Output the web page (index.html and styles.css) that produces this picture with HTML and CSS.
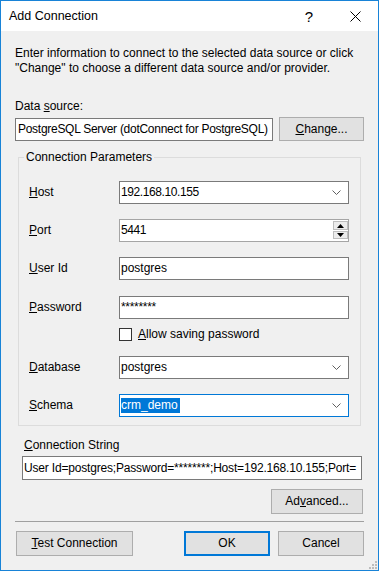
FILE: index.html
```html
<!DOCTYPE html>
<html lang="en">
<head>
<meta charset="utf-8">
<title>Add Connection</title>
<link rel="stylesheet" href="styles.css">
</head>
<body>
<div class="window">
  <div class="titlebar">
    <span class="title">Add Connection</span>
    <span class="cap-btn help">?</span>
    <span class="cap-btn close">
      <svg width="11" height="11" viewBox="0 0 11 11"><path d="M0.5 0.5 L10.5 10.5 M10.5 0.5 L0.5 10.5" stroke="#000" stroke-width="1" fill="none"/></svg>
    </span>
  </div>
  <div class="content">
    <p class="intro">Enter information to connect to the selected data source or click<br>"Change" to choose a different data source and/or provider.</p>
    <div class="ds-label">Data <u>s</u>ource:</div>
    <div class="ds-row">
      <div class="textbox ds-box">PostgreSQL Server (dotConnect for PostgreSQL)</div>
      <div class="btn btn-change"><span><u>C</u>hange...</span></div>
    </div>
    <fieldset class="group">
      <legend>Connection Parameters</legend>
      <div class="params">
        <div class="row">
          <span class="lbl"><u>H</u>ost</span>
          <div class="field combo"><span class="val num">192.168.10.155</span><svg class="chev" width="9" height="5" viewBox="0 0 9 5"><polyline points="0.5,0.5 4.5,4.5 8.5,0.5" fill="none" stroke="#606060" stroke-width="1"/></svg></div>
        </div>
        <div class="row">
          <span class="lbl"><u>P</u>ort</span>
          <div class="field spin"><span class="val num">5441</span>
            <div class="spin-btns">
              <div class="spin-btn"><svg width="7" height="4" viewBox="0 0 7 4"><polygon points="3.5,0 7,4 0,4" fill="#000"/></svg></div>
              <div class="spin-btn"><svg width="7" height="4" viewBox="0 0 7 4"><polygon points="0,0 7,0 3.5,4" fill="#000"/></svg></div>
            </div>
          </div>
        </div>
        <div class="row">
          <span class="lbl"><u>U</u>ser Id</span>
          <div class="field text"><span class="val">postgres</span></div>
        </div>
        <div class="row gap16">
          <span class="lbl"><u>P</u>assword</span>
          <div class="field text"><span class="val pw">********</span></div>
        </div>
        <div class="row cb-row">
          <span class="lbl"></span>
          <span class="checkbox"></span>
          <span class="cb-label"><u>A</u>llow saving password</span>
        </div>
        <div class="row">
          <span class="lbl"><u>D</u>atabase</span>
          <div class="field combo"><span class="val">postgres</span><svg class="chev" width="9" height="5" viewBox="0 0 9 5"><polyline points="0.5,0.5 4.5,4.5 8.5,0.5" fill="none" stroke="#606060" stroke-width="1"/></svg></div>
        </div>
        <div class="row">
          <span class="lbl"><u>S</u>chema</span>
          <div class="field combo focused"><span class="val"><span class="sel">crm_demo</span></span><svg class="chev" width="9" height="5" viewBox="0 0 9 5"><polyline points="0.5,0.5 4.5,4.5 8.5,0.5" fill="none" stroke="#606060" stroke-width="1"/></svg></div>
        </div>
      </div>
    </fieldset>
    <div class="cs-label"><u>C</u>onnection String</div>
    <div class="textbox cs-box">User Id=postgres;Password=********;Host=192.168.10.155;Port=</div>
    <div class="adv-row">
      <div class="btn btn-adv"><span>Ad<u>v</u>anced...</span></div>
    </div>
    <div class="sep"></div>
    <div class="footer">
      <div class="btn btn-test"><span><u>T</u>est Connection</span></div>
      <div class="btn btn-ok"><span>OK</span></div>
      <div class="btn btn-cancel"><span>Cancel</span></div>
    </div>
  </div>
  <svg class="grip" width="8" height="8" viewBox="0 0 8 8">
    <rect x="6" y="0" width="2" height="2" fill="#bcbcbc"/>
    <rect x="3" y="3" width="2" height="2" fill="#bcbcbc"/>
    <rect x="6" y="3" width="2" height="2" fill="#bcbcbc"/>
    <rect x="0" y="6" width="2" height="2" fill="#bcbcbc"/>
    <rect x="3" y="6" width="2" height="2" fill="#bcbcbc"/>
    <rect x="6" y="6" width="2" height="2" fill="#bcbcbc"/>
  </svg>
</div>
</body>
</html>
```

FILE: styles.css
```css
* { box-sizing: border-box; }
html, body { margin: 0; padding: 0; }
body {
  width: 379px;
  height: 571px;
  overflow: hidden;
  background: #f0f0f0;
  color: #000;
  font-family: "Liberation Sans", Arial, sans-serif;
  font-size: 12px;
  line-height: 15px;
}
u { text-underline-offset: 1px; }

.window {
  position: relative;
  width: 379px;
  height: 571px;
  border: 1px solid #1883d7;
  background: #f0f0f0;
  display: flex;
  flex-direction: column;
}

.titlebar {
  flex: none;
  height: 30px;
  background: #fff;
  display: flex;
  align-items: center;
}
.title {
  flex: 1;
  padding-left: 8px;
  font-size: 12.5px;
}
.cap-btn {
  width: 46px;
  height: 30px;
  display: flex;
  align-items: center;
  justify-content: center;
}
.help { font-size: 15px; padding-top: 1px; }
.close svg { display: block; }

.content {
  padding: 15px 14px 0 14px;
  display: flex;
  flex-direction: column;
}
.intro { margin: 0; }
.ds-label { margin-top: 23px; }
.ds-row {
  margin-top: 3px;
  display: flex;
  gap: 6px;
  align-items: flex-start;
}

.textbox {
  background: #fff;
  border: 1px solid #7a7a7a;
  padding: 0 1px;
  display: flex;
  align-items: center;
  white-space: nowrap;
  overflow: hidden;
}
.ds-box {
  width: 258px;
  height: 23px;
  margin-top: 1px;
  padding-left: 2px;
  letter-spacing: -0.28px;
}

.btn {
  background: #e1e1e1;
  border: 1px solid #adadad;
  display: flex;
  align-items: center;
  justify-content: center;
  white-space: nowrap;
}
.btn-change { width: 85px; height: 24px; }

.group {
  margin: 9px 3px 0;
  padding: 0;
  border: 1px solid #dcdcdc;
  min-width: 0;
}
.group legend {
  margin-left: 5px;
  padding: 0 2px;
  line-height: 15px;
}
.params {
  padding: 16px 0 8px 10px;
  display: flex;
  flex-direction: column;
}
.row {
  display: flex;
  align-items: center;
  height: 23px;
}
.row + .row { margin-top: 15px; }
.row.gap16 { margin-top: 16px; }
.row.cb-row { height: 13px; margin-top: 9px; }
.lbl { width: 90px; flex: none; }

.field {
  width: 230px;
  height: 23px;
  background: #fff;
  border: 1px solid #7a7a7a;
  padding: 0 1px;
  display: flex;
  align-items: center;
}
.field .val { flex: 1; white-space: nowrap; overflow: hidden; }
.field .num { letter-spacing: -0.4px; }
.chev { flex: none; margin-right: 6px; display: block; }
.field.focused { border-color: #0078d7; }
.sel { background: #0078d7; color: #fff; display: inline-block; line-height: 15px; padding-right: 2px; }
.pw { letter-spacing: -0.3px; }

.field.spin {
  border-color: #a5a5a5;
  align-items: flex-start;
  padding-right: 0;
}
.field.spin .val { align-self: center; }
.spin-btns {
  flex: none;
  width: 15px;
  margin-top: 1px;
  display: flex;
  flex-direction: column;
}
.spin-btn {
  height: 9px;
  background: #ececec;
  border: 1px solid #bdbdbd;
  display: flex;
  align-items: center;
  justify-content: center;
}
.spin-btn + .spin-btn { height: 8px; margin-top: 1px; }
.spin-btn svg { display: block; }

.checkbox {
  width: 13px;
  height: 13px;
  background: #fff;
  border: 1px solid #333;
  flex: none;
}
.cb-label { margin-left: 6px; }

.cs-label { margin-top: 12px; margin-left: 9px; }
.cs-box {
  margin: 3px 2px 0 7px;
  height: 24px;
  letter-spacing: -0.18px;
}

.adv-row {
  margin-top: 9px;
  display: flex;
  justify-content: flex-end;
  padding-right: 1px;
}
.btn-adv { width: 92px; height: 25px; }

.sep {
  margin-top: 7px;
  height: 1px;
  background: #a0a0a0;
}

.footer {
  margin-top: 9px;
  display: flex;
  align-items: center;
}
.footer .btn { height: 25px; }
.btn-test { width: 117px; margin-left: 1px; }
.btn-ok { width: 86px; margin-left: auto; border: 2px solid #0078d7; }
.btn-cancel { width: 86px; margin-left: 8px; }

.grip {
  position: absolute;
  right: 1px;
  bottom: 1px;
  display: block;
}
```
